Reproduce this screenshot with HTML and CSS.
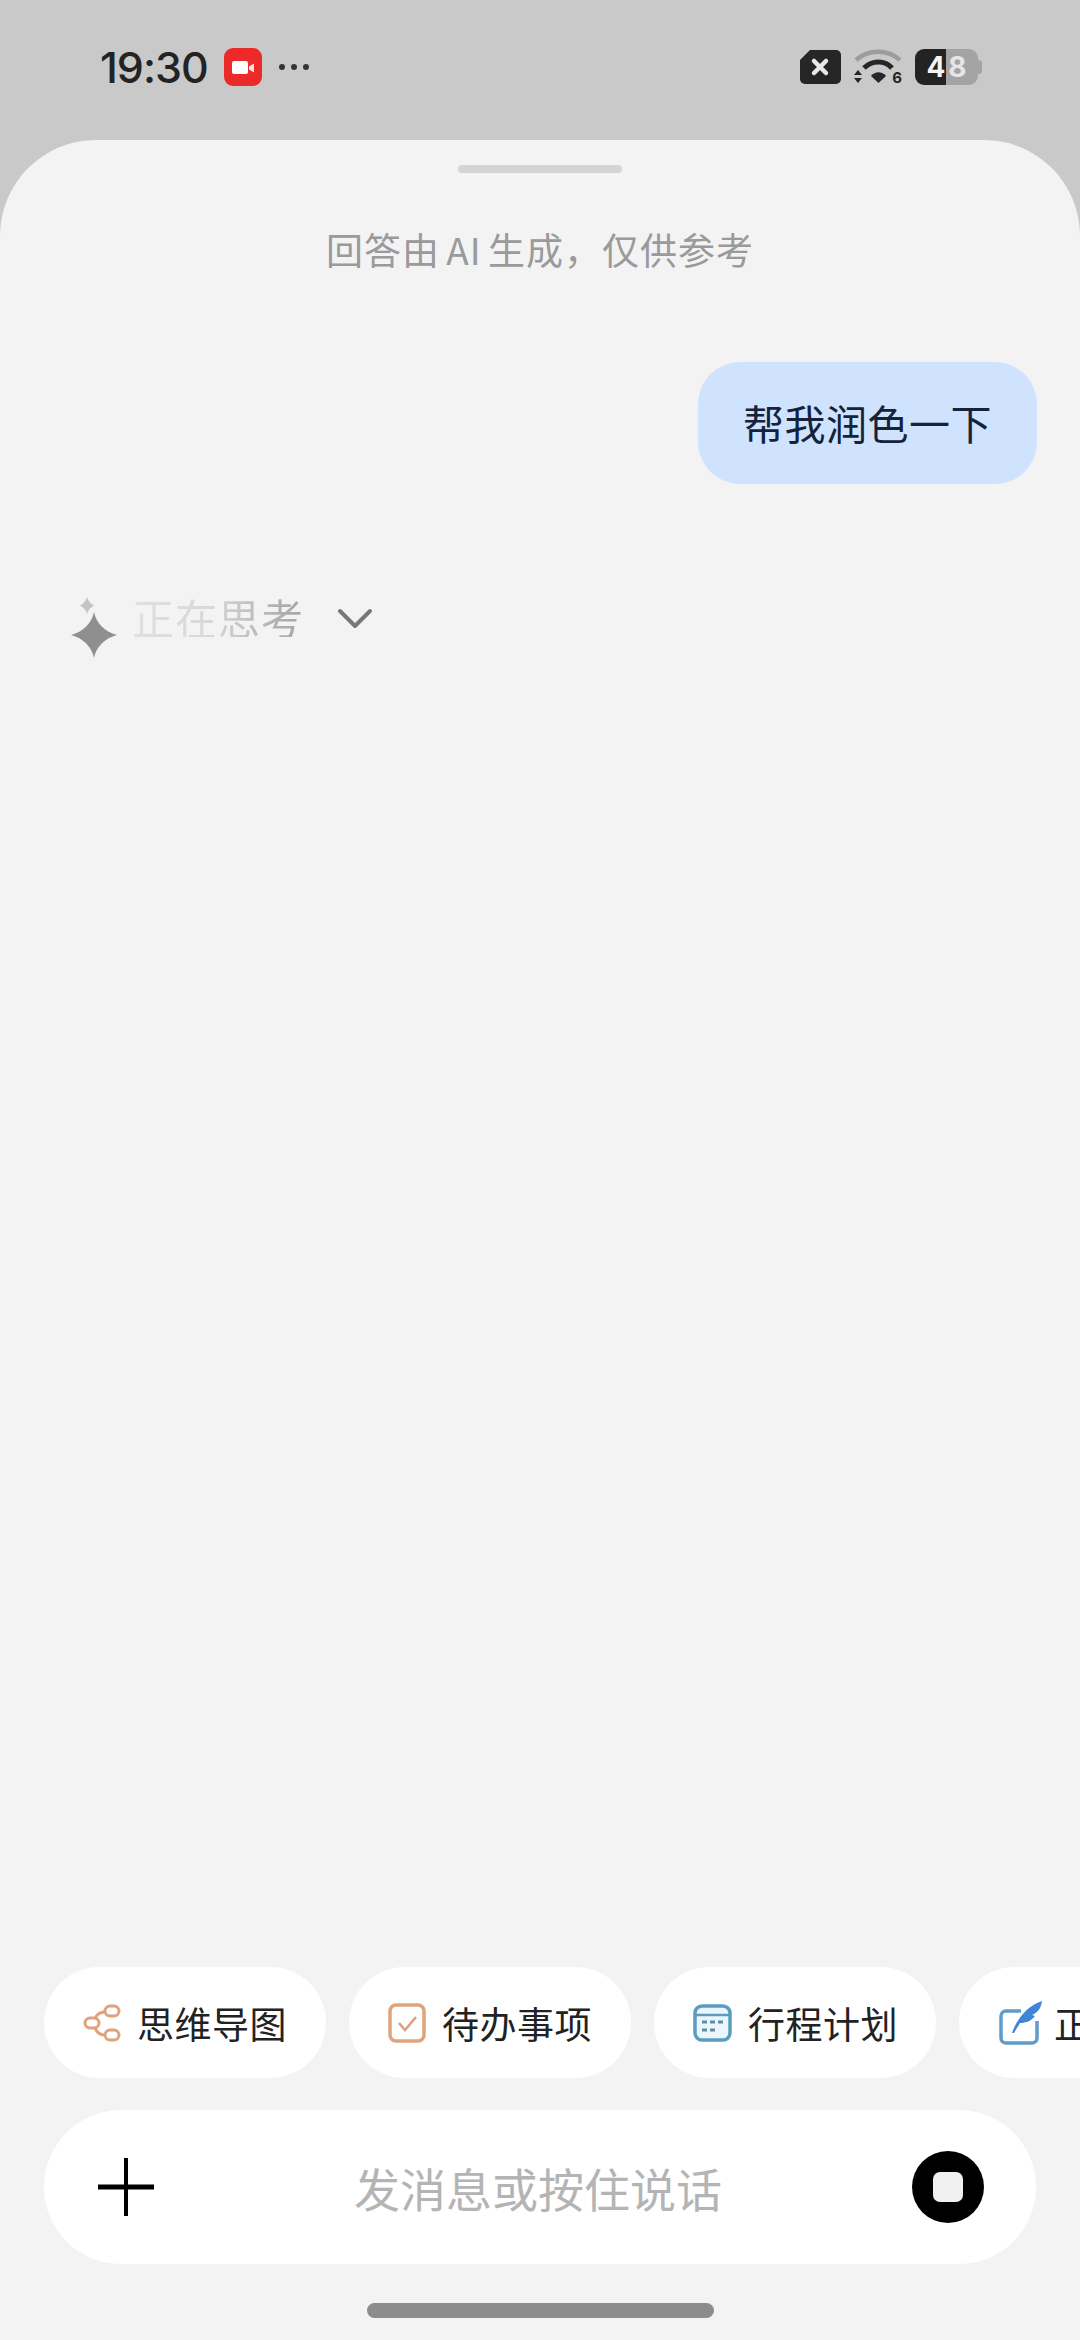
FILE: index.html
```html
<!DOCTYPE html>
<html lang="zh-CN">
<head>
    <meta charset="UTF-8">
    <title>AI Chat</title>
    <link rel="stylesheet" href="styles.css">
</head>
<body>
    <div class="status-bar">
        <div class="status-left">
            <span class="time">19:30</span>
            <span class="rec-icon">
                <svg width="38" height="38" viewBox="0 0 38 38">
                    <rect x="8" y="13" width="16" height="13" rx="2" fill="#fff"/>
                    <path d="M25 18.500l5-3v9l-5-3z" fill="#fde0dc"/>
                </svg>
            </span>
            <span class="dots"><i></i><i></i><i></i></span>
        </div>
        <div class="status-right">
            <span class="sim-icon">
                <svg width="44" height="36" viewBox="0 0 44 36">
                    <path d="M12 1h26a5 5 0 0 1 5 5v24a5 5 0 0 1-5 5H7a5 5 0 0 1-5-5V11z" fill="#262626"/>
                    <path d="M16 12l12 12M28 12L16 24" stroke="#e8e8e8" stroke-width="4.500" stroke-linecap="round"/>
                </svg>
            </span>
            <span class="wifi-icon">
                <svg width="48" height="36" viewBox="0 0 48 36">
                    <path d="M2 11C14 0 34 0 46 11" fill="none" stroke="#9c9c9c" stroke-width="4.500"/>
                    <path d="M10 19C18 11 31 11 38 19" fill="none" stroke="#262626" stroke-width="5"/>
                    <path d="M17 27c4-5 11-5 15 0l-7.500 7z" fill="#262626"/>
                    <path d="M0 29h8l-4 5z" fill="#262626"/>
                    <path d="M4 21l4 5H0z" fill="#262626"/>
                </svg>
                <span class="wifi-six">6</span>
            </span>
            <span class="battery"><b>4</b><span class="battery-rest">8</span></span>
        </div>
    </div>

    <div class="sheet">
        <div class="handle"></div>
        <p class="notice">回答由 AI 生成，仅供参考</p>

        <div class="message-row">
            <div class="bubble">帮我润色一下</div>
        </div>

        <div class="thinking">
            <svg class="sparkle" width="46" height="62" viewBox="0 0 46 62">
                <path d="M16 0c1 4 4 7 7 8.500c-3 1.500-6 4.500-7 8.500c-1-4-4-7-7-8.500c3-1.500 6-4.500 7-8.500z" fill="#c4c4c4"/>
                <path d="M23 15c2 11 11 20 23 23c-12 3-21 12-23 23c-2-11-11-20-23-23c12-3 21-12 23-23z" fill="#8f8f8f"/>
            </svg>
            <span class="thinking-text">正在思考</span>
            <svg class="chevron" width="36" height="22" viewBox="0 0 36 22">
                <path d="M3 3l15 15L33 3" fill="none" stroke="#777" stroke-width="4" stroke-linecap="round" stroke-linejoin="round"/>
            </svg>
        </div>

        <div class="spacer"></div>

        <div class="chips">
            <div class="chip">
                <svg width="38" height="38" viewBox="0 0 38 38" fill="none" stroke="#e0a27a" stroke-width="3">
                    <rect x="2" y="14" width="14" height="10" rx="5"/>
                    <rect x="22" y="2" width="14" height="10" rx="5"/>
                    <rect x="22" y="26" width="14" height="10" rx="5"/>
                    <path d="M22 8c-6 0-8 3-10 6M22 31c-6 0-8-3-10-7"/>
                </svg>
                <span>思维导图</span>
            </div>
            <div class="chip">
                <svg width="38" height="40" viewBox="0 0 38 40" fill="none">
                    <rect x="2" y="2" width="34" height="36" rx="6" stroke="#dea47c" stroke-width="3.500"/>
                    <path d="M11 20l6 7 11-13" stroke="#d9a083" stroke-width="2.500"/>
                </svg>
                <span>待办事项</span>
            </div>
            <div class="chip">
                <svg width="39" height="38" viewBox="0 0 39 38" fill="none">
                    <rect x="2" y="2" width="35" height="34" rx="7" fill="#eaf6fb" stroke="#5b9cc0" stroke-width="3.500"/>
                    <path d="M2 11h35" stroke="#5b9cc0" stroke-width="2.500"/>
                    <path d="M9 18h5M17 18h5M25 18h5M9 26h5M17 26h5" stroke="#5f8ea8" stroke-width="3"/>
                </svg>
                <span>行程计划</span>
            </div>
            <div class="chip">
                <svg width="43" height="44" viewBox="0 0 43 44" fill="none">
                    <path d="M22 10H7a5 5 0 0 0-5 5v22a5 5 0 0 0 5 5h26a5 5 0 0 0 5-5V20" stroke="#5f9ccb" stroke-width="3.500"/>
                    <path d="M13 32C18 18 28 5 43 0c-1 8-5 12-10 14l3 1c-4 5-9 7-15 7l-6 10z" fill="#3f86d6"/>
                </svg>
                <span>正</span>
            </div>
        </div>

        <div class="input-bar">
            <svg width="56" height="58" viewBox="0 0 56 58">
                <path d="M28 0v58" stroke="#000" stroke-width="4"/>
                <path d="M0 29h56" stroke="#000" stroke-width="5"/>
            </svg>
            <span class="placeholder">发消息或按住说话</span>
            <span class="stop-btn"><i></i></span>
        </div>

        <div class="home-bar"></div>
    </div>
</body>
</html>
```

FILE: styles.css
```css
* {
    box-sizing: border-box;
}
body {
    font-family: 'Noto Sans CJK SC', 'Noto Sans', sans-serif;
    margin: 0;
    width: 1080px;
    height: 2340px;
    overflow: hidden;
    display: flex;
    flex-direction: column;
    background: #c9c9c9;
}

/* status bar */
.status-bar {
    height: 140px;
    flex-shrink: 0;
    display: flex;
    justify-content: space-between;
    align-items: flex-start;
    padding: 48px 102px 0 100px;
}
.status-left,
.status-right {
    display: flex;
    align-items: center;
    height: 38px;
}
.time {
    font-family: 'Inter', sans-serif;
    font-size: 43px;
    font-weight: 500;
    letter-spacing: -1px;
    line-height: 38px;
    color: #232323;
    width: 107px;
    white-space: nowrap;
}
.rec-icon {
    width: 38px;
    height: 38px;
    margin-left: 17px;
    border-radius: 9px;
    background: #ec2a2a;
    display: flex;
}
.dots {
    display: flex;
    gap: 6px;
    margin-left: 17px;
}
.dots i {
    width: 6px;
    height: 6px;
    border-radius: 50%;
    background: #333;
}
.status-right svg {
    display: block;
}
.sim-icon {
    margin-right: 12px;
}
.wifi-icon {
    position: relative;
    margin-right: 13px;
}
.wifi-six {
    position: absolute;
    right: 0;
    bottom: 0;
    font-family: 'Inter', sans-serif;
    font-size: 15px;
    font-weight: 700;
    line-height: 15px;
    color: #262626;
}
.battery {
    position: relative;
    width: 63px;
    height: 36px;
    border-radius: 9px;
    background: linear-gradient(90deg, #232323 0, #232323 31px, #a4a4a4 31px);
    display: flex;
    align-items: center;
    justify-content: center;
    gap: 3px;
    font-family: 'Inter', sans-serif;
    font-size: 28px;
    line-height: 36px;
    color: #f4f4f4;
}
.battery::after {
    content: '';
    position: absolute;
    right: -4px;
    top: 11px;
    width: 4px;
    height: 14px;
    border-radius: 0 3px 3px 0;
    background: #a4a4a4;
}
.battery b {
    font-weight: 700;
}
.battery-rest {
    font-weight: 700;
    color: #e6e6e6;
}

/* sheet */
.sheet {
    flex: 1;
    display: flex;
    flex-direction: column;
    background: #f3f3f4;
    border-radius: 96px 96px 0 0;
    min-height: 0;
}
.handle {
    width: 164px;
    height: 8px;
    margin: 25px auto 0;
    border-radius: 4px;
    background: #d4d4d4;
}
.notice {
    margin: 50px 0 0;
    text-align: center;
    font-size: 37px;
    line-height: 52px;
    letter-spacing: 1px;
    word-spacing: -3px;
    color: #9a9a9a;
}
.message-row {
    display: flex;
    justify-content: flex-end;
    padding-right: 43px;
    margin-top: 87px;
}
.bubble {
    height: 122px;
    padding: 0 45px;
    border-radius: 42px;
    background: #cfe2fe;
    font-size: 41px;
    letter-spacing: 0.5px;
    line-height: 120px;
    color: #14233a;
}
.thinking {
    display: flex;
    align-items: flex-start;
    margin-top: 113px;
    padding-left: 71px;
    height: 62px;
}
.thinking-text {
    margin-left: 15px;
    font-size: 42px;
    letter-spacing: 1px;
    line-height: 40px;
    background: linear-gradient(90deg, #e0e0e0 0, #d8d8d8 45%, #a2a2a2 100%);
    -webkit-background-clip: text;
    background-clip: text;
    color: transparent;
}
.chevron {
    margin: 11px 0 0 33px;
}
.spacer {
    flex: 1;
}

/* shortcut chips */
.chips {
    display: flex;
    gap: 23px;
    padding-left: 44px;
    overflow: hidden;
    flex-shrink: 0;
}
.chip {
    flex: 0 0 282px;
    height: 111px;
    padding-left: 39px;
    border-radius: 56px;
    background: #fff;
    display: flex;
    align-items: center;
    gap: 16px;
    font-size: 37px;
    letter-spacing: 0.5px;
    color: #222;
}
.chip:last-child {
    padding-left: 40px;
    gap: 12px;
}
.input-bar {
    height: 154px;
    margin: 32px 44px 0;
    padding: 0 52px 0 54px;
    border-radius: 77px;
    background: #fff;
    display: flex;
    align-items: center;
    justify-content: space-between;
    flex-shrink: 0;
}
.placeholder {
    margin-left: 10px;
    font-size: 46px;
    color: #b4b4b4;
}
.stop-btn {
    width: 72px;
    height: 72px;
    border-radius: 50%;
    background: #000;
    display: flex;
    align-items: center;
    justify-content: center;
}
.stop-btn i {
    width: 30px;
    height: 30px;
    border-radius: 7px;
    background: #f0f0f0;
}
.home-bar {
    width: 347px;
    height: 15px;
    margin: 39px auto 22px;
    border-radius: 8px;
    background: #8c8c8c;
    flex-shrink: 0;
}
```
